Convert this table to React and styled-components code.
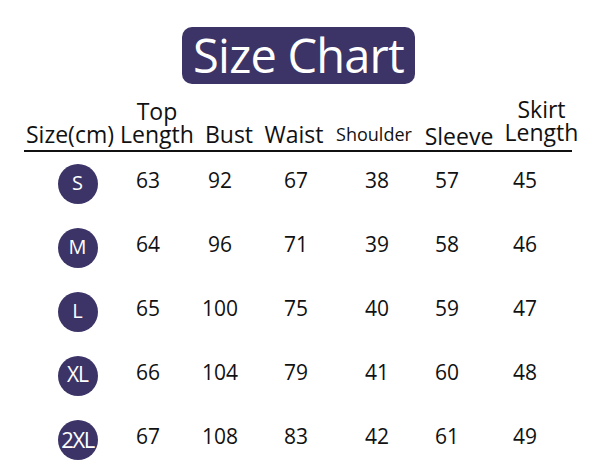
import React from "react";
import styled, { createGlobalStyle } from "styled-components";

const rows = [
  { size: "S", values: [63, 92, 67, 38, 57, 45] },
  { size: "M", values: [64, 96, 71, 39, 58, 46] },
  { size: "L", values: [65, 100, 75, 40, 59, 47] },
  { size: "XL", values: [66, 104, 79, 41, 60, 48] },
  { size: "2XL", values: [67, 108, 83, 42, 61, 49] },
];

const headers = [
  { label: ["Size(cm)"] },
  { label: ["Top", "Length"] },
  { label: ["Bust"] },
  { label: ["Waist"] },
  { label: ["Shoulder"], small: true },
  { label: ["Sleeve"], low: true },
  { label: ["Skirt", "Length"], high: true },
];

function App() {
  return (
    <Page>
      <GlobalStyle />
      <TitleWrap>
        <Title>Size Chart</Title>
      </TitleWrap>
      <HeaderRow>
        {headers.map((h, i) => (
          <HeadCell key={i} $small={h.small} $low={h.low} $high={h.high}>
            {h.label.map((line) => (
              <span key={line}>{line}</span>
            ))}
          </HeadCell>
        ))}
      </HeaderRow>
      {rows.map((r) => (
        <Row key={r.size}>
          <Badge $long={r.size.length > 2} $mid={r.size.length === 2}>
            {r.size}
          </Badge>
          {r.values.map((v, i) => (
            <Value key={i}>{v}</Value>
          ))}
        </Row>
      ))}
    </Page>
  );
}

const GlobalStyle = createGlobalStyle`
  body {
    margin: 0;
    background: #fff;
    font-family: "Open Sans", "Noto Sans", sans-serif;
  }
`;

const Page = styled.div`
  width: 600px;
  height: 470px;
  padding-top: 27px;
  box-sizing: border-box;
  overflow: hidden;
`;

const TitleWrap = styled.div`
  display: flex;
  justify-content: center;
  padding-right: 3px;
`;

const Title = styled.h1`
  margin: 0;
  height: 57px;
  padding: 0 11px 2px;
  box-sizing: border-box;
  display: flex;
  align-items: center;
  background: #3c3466;
  border-radius: 10px;
  color: #fff;
  font-size: 47px;
  font-weight: 400;
  letter-spacing: -0.8px;
`;

const HeaderRow = styled.div`
  display: grid;
  grid-template-columns: 92px 82px 62px 68px 92px 78px 87px;
  align-items: end;
  width: 548px;
  margin: 16px 0 0 24px;
  padding-bottom: 4px;
  border-bottom: 2px solid #111;
`;

const HeadCell = styled.div`
  display: flex;
  flex-direction: column;
  align-items: center;
  color: #111;
  font-size: ${(p) => (p.$small ? "18px" : "23px")};
  line-height: 23px;
  white-space: nowrap;
  transform: translateY(${(p) => (p.$low ? "2px" : p.$high ? "-2px" : "0")});
`;

const Row = styled.div`
  display: grid;
  grid-template-columns: 81px 60px 84px 68px 94px 46px 110px;
  align-items: center;
  height: 64px;
  margin-left: 37px;
`;

const Badge = styled.div`
  justify-self: center;
  width: 40px;
  height: 40px;
  border-radius: 50%;
  background: #3c3466;
  color: #fff;
  display: flex;
  align-items: center;
  justify-content: center;
  font-size: ${(p) => (p.$long ? "22px" : p.$mid ? "21px" : "20px")};
  line-height: 1;
  letter-spacing: ${(p) => (p.$long ? "-1.5px" : p.$mid ? "-1px" : "0")};
  padding-bottom: 3px;
  box-sizing: border-box;
`;

const Value = styled.div`
  text-align: center;
  color: #111;
  font-size: 21px;
  margin-bottom: 9px;
`;

export default App;
